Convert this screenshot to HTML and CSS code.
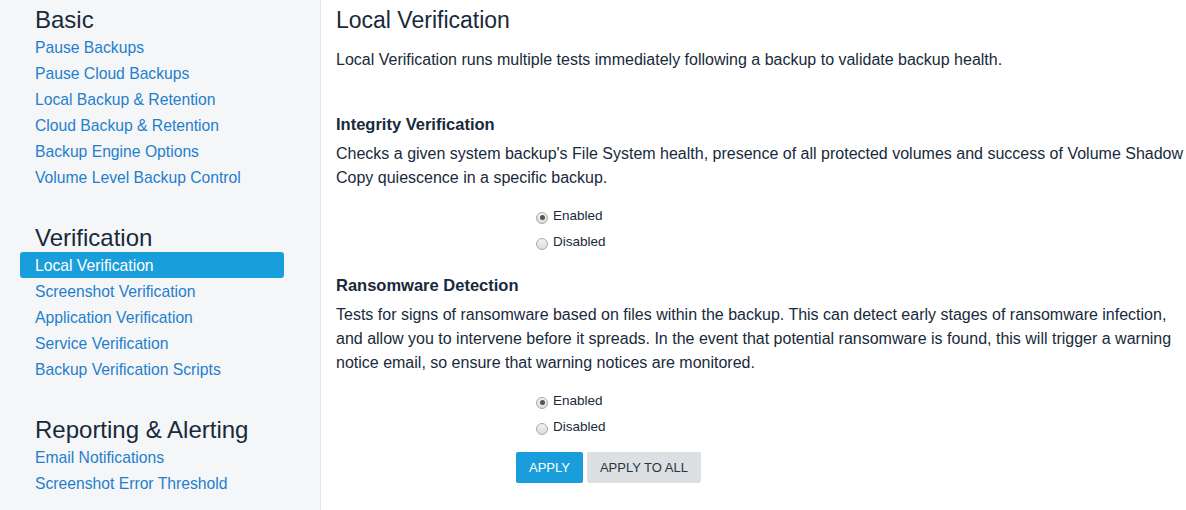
FILE: index.html
```html
<!DOCTYPE html>
<html>
<head>
<meta charset="utf-8">
<link rel="stylesheet" href="styles.css">
</head>
<body>
<div class="page">
  <aside class="sidebar">
    <h2 class="side-head first">Basic</h2>
    <a class="side-link">Pause Backups</a>
    <a class="side-link">Pause Cloud Backups</a>
    <a class="side-link">Local Backup &amp; Retention</a>
    <a class="side-link">Cloud Backup &amp; Retention</a>
    <a class="side-link">Backup Engine Options</a>
    <a class="side-link">Volume Level Backup Control</a>
    <h2 class="side-head second">Verification</h2>
    <a class="side-link active">Local Verification</a>
    <a class="side-link">Screenshot Verification</a>
    <a class="side-link">Application Verification</a>
    <a class="side-link">Service Verification</a>
    <a class="side-link">Backup Verification Scripts</a>
    <h2 class="side-head third">Reporting &amp; Alerting</h2>
    <a class="side-link">Email Notifications</a>
    <a class="side-link">Screenshot Error Threshold</a>
  </aside>
  <main class="main">
    <h1 class="title">Local Verification</h1>
    <p class="intro">Local Verification runs multiple tests immediately following a backup to validate backup health.</p>

    <h3 class="sec-head">Integrity Verification</h3>
    <p class="desc">Checks a given system backup's File System health, presence of all protected volumes and success of Volume Shadow Copy quiescence in a specific backup.</p>
    <div class="radios">
      <label class="radio"><span class="dot checked"></span>Enabled</label>
      <label class="radio"><span class="dot"></span>Disabled</label>
    </div>

    <h3 class="sec-head">Ransomware Detection</h3>
    <p class="desc">Tests for signs of ransomware based on files within the backup. This can detect early stages of ransomware infection, and allow you to intervene before it spreads. In the event that potential ransomware is found, this will trigger a warning notice email, so ensure that warning notices are monitored.</p>
    <div class="radios">
      <label class="radio"><span class="dot checked"></span>Enabled</label>
      <label class="radio"><span class="dot"></span>Disabled</label>
    </div>
    <div class="buttons">
      <button class="btn primary">APPLY</button>
      <button class="btn secondary">APPLY TO ALL</button>
    </div>
  </main>
</div>
</body>
</html>
```

FILE: styles.css
```css
* { box-sizing: border-box; }
html, body { margin: 0; padding: 0; background: #fff; }
body {
  font-family: "Liberation Sans", Arial, sans-serif;
  color: #182a3b;
  width: 1186px;
  height: 510px;
  overflow: hidden;
}
.page {
  display: flex;
  height: 510px;
}
.sidebar {
  width: 321px;
  flex: none;
  background: #f5f6f8;
  border-right: 1px solid #e4e6ea;
  padding: 6px 36px 0 20px;
  display: flex;
  flex-direction: column;
}
.side-head {
  font-weight: normal;
  font-size: 24px;
  line-height: 28px;
  margin: 0 0 0 15px;
  color: #182a3b;
}
.side-head.second { margin-top: 34px; }
.side-head.third { margin-top: 34px; }
.side-link {
  display: block;
  font-size: 15.7px;
  line-height: 24px;
  height: 26px;
  padding: 2px 0 0 15px;
  color: #1f7fcc;
  border-radius: 3px;
  width: 264px;
  white-space: nowrap;
}
.side-link.active {
  background: #1a9edb;
  color: #fff;
}
.main {
  flex: 1;
  padding: 6px 2px 0 15px;
}
.title {
  font-weight: normal;
  font-size: 23px;
  line-height: 28px;
  margin: 0;
}
.intro {
  font-size: 16px;
  line-height: 24px;
  margin: 14px 0 0;
}
.sec-head {
  font-size: 16.5px;
  line-height: 24px;
  margin: 40px 0 0;
  font-weight: bold;
}
.desc {
  font-size: 16px;
  line-height: 24px;
  margin: 6px 0 0;
}
.radios {
  display: flex;
  flex-direction: column;
  padding-left: 200px;
  margin-top: 13px;
}
.radio {
  display: flex;
  align-items: center;
  font-size: 13.5px;
  line-height: 26px;
  height: 26px;
  color: #182a3b;
}
.dot {
  width: 12px;
  height: 12px;
  border-radius: 50%;
  border: 1px solid #a9a9a9;
  background: linear-gradient(#f2f2f2, #dcdcdc);
  margin: 3px 5px 0 0;
  position: relative;
}
.dot.checked::after {
  content: "";
  position: absolute;
  left: 2.5px;
  top: 2.5px;
  width: 5px;
  height: 5px;
  border-radius: 50%;
  background: #555;
}
.radios + .sec-head { margin-top: 18px; }
.buttons {
  display: flex;
  gap: 4px;
  padding-left: 180px;
  margin-top: 12px;
}
.btn {
  border: none;
  border-radius: 2px;
  height: 31px;
  font-family: inherit;
  font-size: 13px;
  padding: 0 13px;
}
.btn.primary { background: #1a9edb; color: #fff; }
.btn.secondary { background: #dde0e3; color: #2b3540; }
```
